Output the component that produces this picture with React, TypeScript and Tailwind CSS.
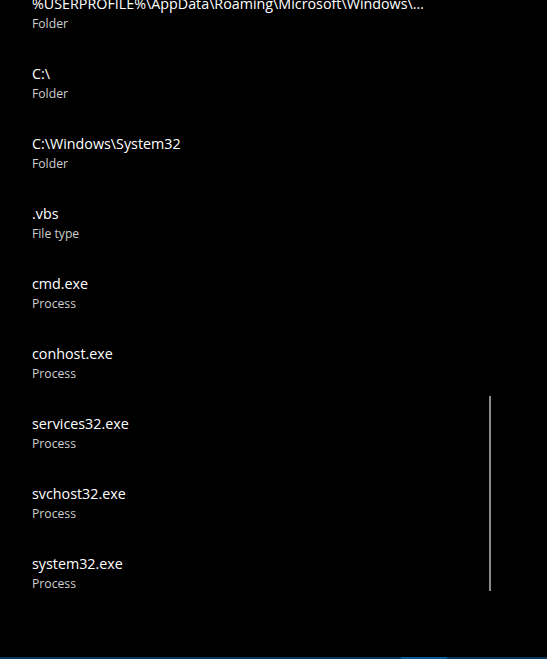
import React from "react";

const items = [
  { t: "%USERPROFILE%\\AppData\\Roaming\\Microsoft\\Windows\\Start Menu\\Programs", s: "Folder" },
  { t: "C:\\", s: "Folder" },
  { t: "C:\\Windows\\System32", s: "Folder" },
  { t: ".vbs", s: "File type" },
  { t: "cmd.exe", s: "Process" },
  { t: "conhost.exe", s: "Process" },
  { t: "services32.exe", s: "Process" },
  { t: "svchost32.exe", s: "Process" },
  { t: "system32.exe", s: "Process" },
];

export default function App() {
  return (
    <div
      className="relative h-[659px] w-[547px] overflow-hidden bg-black"
      style={{ fontFamily: '"Open Sans", "Noto Sans", sans-serif' }}
    >
      <div className="-mt-[16px] flex flex-col">
        {items.map((it, i) => (
          <div key={i} className="h-[70px] pl-[32px] pt-[10px]">
            <div className="w-[397px] overflow-hidden whitespace-nowrap text-ellipsis text-[14.3px] leading-[20px] text-white">
              {it.t}
            </div>
            <div className="text-[12.2px] leading-[20px] text-[#cfcfcf]">{it.s}</div>
          </div>
        ))}
      </div>
      <div className="absolute left-[489px] top-[396px] h-[195px] w-[2px] bg-[#8a8a8a]" />
      <div className="absolute bottom-0 left-0 flex h-[2px] w-full bg-[#07395c]">
        <div className="ml-[401px] h-full w-[46px] bg-[#0a5b98]" />
      </div>
    </div>
  );
}
